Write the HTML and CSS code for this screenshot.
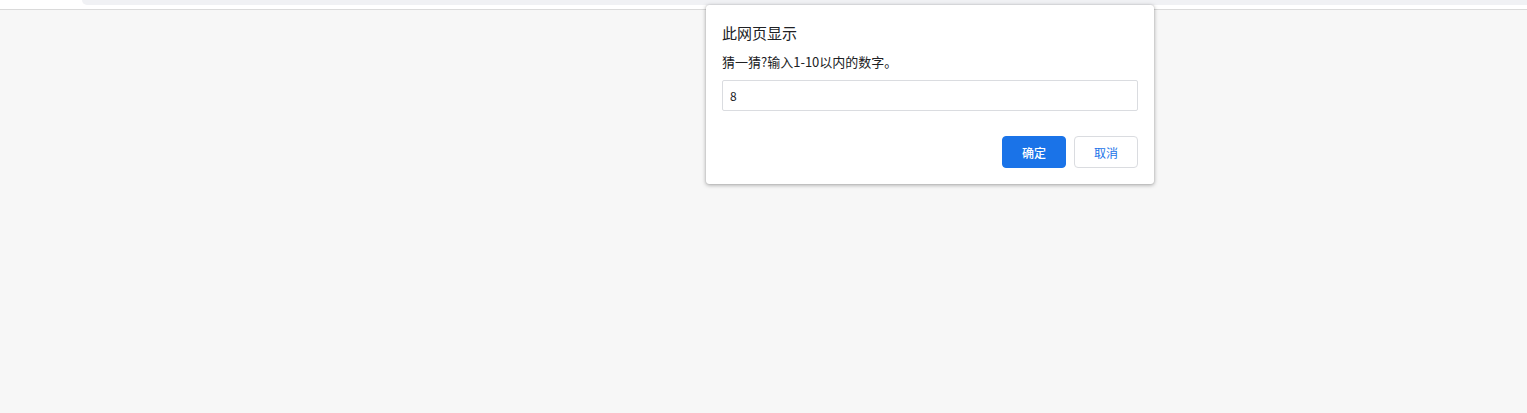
FILE: index.html
```html
<!DOCTYPE html>
<html lang="zh-CN">

<head>
    <meta charset="UTF-8">
    <meta name="viewport" content="width=device-width, initial-scale=1.0">
    <title>此网页显示</title>
    <link rel="stylesheet" href="styles.css">
</head>

<body>

    <div class="toolbar">
        <div class="omnibox"></div>
    </div>

    <div class="page"></div>

    <div class="dialog">
        <div class="dialog-title">此网页显示</div>
        <div class="dialog-message">猜一猜?输入1-10以内的数字。</div>
        <input type="text" class="dialog-input" value="8">
        <div class="dialog-buttons">
            <button class="btn btn-ok">确定</button>
            <button class="btn btn-cancel">取消</button>
        </div>
    </div>

</body>

</html>
```

FILE: styles.css
```css
body {
    margin: 0;
    background-color: #f7f7f7;
    font-family: "Noto Sans CJK SC", "Noto Sans", sans-serif;
    color: #202124;
}

.toolbar {
    height: 9px;
    background-color: #ffffff;
    border-bottom: 1px solid #dadada;
}

.omnibox {
    margin-left: 82px;
    height: 5px;
    background-color: #f0f1f4;
    border-bottom-left-radius: 6px;
}

.page {
    height: 403px;
}

.dialog {
    position: absolute;
    left: 706px;
    top: 5px;
    width: 448px;
    box-sizing: border-box;
    padding: 18px 16px 16px 16px;
    background-color: #ffffff;
    border-radius: 3px;
    box-shadow: 0 1px 4px rgba(0, 0, 0, 0.35), 0 0 1px rgba(0, 0, 0, 0.25);
}

.dialog-title {
    font-size: 15px;
    line-height: 20px;
}

.dialog-message {
    margin-top: 10px;
    font-size: 13px;
    line-height: 18px;
}

.dialog-input {
    display: block;
    margin-top: 9px;
    width: 100%;
    height: 31px;
    box-sizing: border-box;
    padding: 0 7px;
    border: 1px solid #dadce0;
    border-radius: 2px;
    font-family: inherit;
    font-size: 12px;
    color: #202124;
    outline: none;
}

.dialog-buttons {
    display: flex;
    justify-content: flex-end;
    gap: 8px;
    margin-top: 25px;
}

.btn {
    width: 64px;
    height: 32px;
    border-radius: 4px;
    font-family: inherit;
    font-size: 12px;
    cursor: pointer;
    padding: 0;
}

.btn-ok {
    background-color: #1a73e8;
    border: 1px solid #1a73e8;
    color: #ffffff;
    font-weight: 500;
}

.btn-cancel {
    background-color: #ffffff;
    border: 1px solid #dadce0;
    color: #1a73e8;
}
```
